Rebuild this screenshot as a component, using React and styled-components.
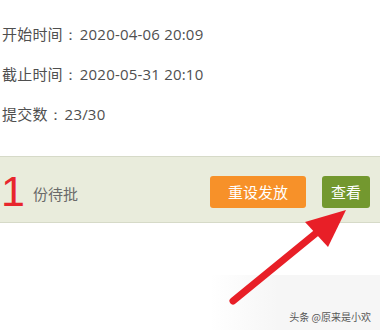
import React from "react";
import styled, { createGlobalStyle } from "styled-components";

const GlobalStyle = createGlobalStyle`
	html, body {
		margin: 0;
		padding: 0;
		background: #ffffff;
	}
	body {
		font-family: "Open Sans", "Noto Sans CJK SC", sans-serif;
	}
`;

const rows = [
	{ label: "开始时间", value: "2020-04-06 20:09" },
	{ label: "截止时间", value: "2020-05-31 20:10" },
	{ label: "提交数", value: "23/30" },
];

function App() {
	return (
		<>
			<GlobalStyle />
			<Page>
				<InfoList>
					{rows.map(({ label, value }) => (
						<InfoRow key={label}>
							{label}
							<Colon>：</Colon>
							{value}
						</InfoRow>
					))}
				</InfoList>

				<Band>
					<Pending>
						<Count>1</Count>
						<PendingText>份待批</PendingText>
					</Pending>
					<Actions>
						<Button $color="#f79129" $width={96}>
							重设发放
						</Button>
						<Button $color="#73982f" $width={48}>
							查看
						</Button>
					</Actions>
				</Band>

				<Fade />
				<Arrow viewBox="0 0 380 330" width="380" height="330">
					<line
						x1="233"
						y1="301"
						x2="326"
						y2="225"
						stroke="#e81f27"
						strokeWidth="7"
						strokeLinecap="round"
					/>
					<polygon points="346,210 305,222 328,247" fill="#e81f27" />
				</Arrow>
				<Watermark>头条 @原来是小欢</Watermark>
			</Page>
		</>
	);
}

const Page = styled.div`
	position: relative;
	width: 380px;
	height: 330px;
	overflow: hidden;
	background: #ffffff;
`;

const InfoList = styled.div`
	display: flex;
	flex-direction: column;
	padding: 14px 0 0 2px;
`;

const InfoRow = styled.div`
	height: 40px;
	line-height: 40px;
	font-size: 15px;
	color: #4f4f4f;
	white-space: nowrap;
	letter-spacing: 0.2px;
`;

const Colon = styled.span`
	display: inline-block;
	width: 13px;
	padding-right: 4px;
	text-align: center;
	font-family: "Noto Sans", sans-serif;
`;

const Band = styled.div`
	margin-top: 22px;
	height: 65px;
	display: flex;
	align-items: center;
	justify-content: space-between;
	padding: 0 10px 0 1px;
	background: #e9ecdc;
	border-top: 1px solid #d6dac8;
	border-bottom: 1px solid #d6dac8;
`;

const Pending = styled.div`
	display: flex;
	align-items: center;
	gap: 8px;
	padding-top: 3px;
`;

const Count = styled.span`
	font-family: "Liberation Sans", Arial, sans-serif;
	font-size: 43px;
	line-height: 1;
	color: #e8262d;
`;

const PendingText = styled.span`
	font-family: "Noto Sans CJK SC", sans-serif;
	font-size: 15px;
	color: #6a6a6a;
	padding-top: 4px;
`;

const Actions = styled.div`
	display: flex;
	align-items: center;
	gap: 16px;
	margin-top: 4px;
`;

const Button = styled.button`
	width: ${(p) => p.$width}px;
	height: 32px;
	border: none;
	border-radius: 3px;
	background: ${(p) => p.$color};
	color: #ffffff;
	font-family: "Noto Sans CJK SC", sans-serif;
	font-size: 15px;
	padding: 0;
	cursor: pointer;
`;

const Fade = styled.div`
	position: absolute;
	right: 0;
	bottom: 0;
	width: 170px;
	height: 55px;
	background: linear-gradient(90deg, rgba(245, 245, 245, 0), #f6f6f6 40%);
`;

const Arrow = styled.svg`
	position: absolute;
	top: 0;
	left: 0;
	pointer-events: none;
`;

const Watermark = styled.div`
	position: absolute;
	right: 9px;
	bottom: 6px;
	font-family: "Noto Sans CJK SC", sans-serif;
	font-size: 10px;
	color: #555555;
	white-space: nowrap;
`;

export default App;
